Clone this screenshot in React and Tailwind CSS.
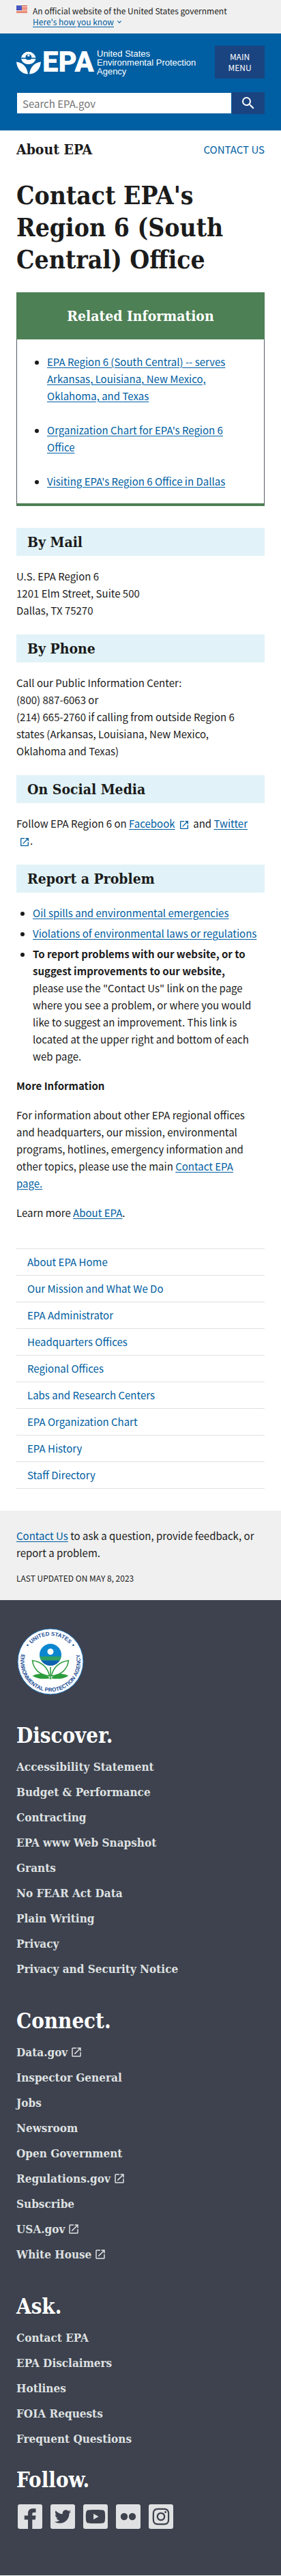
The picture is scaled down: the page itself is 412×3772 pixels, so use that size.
import React from "react";
import { MdSearch, MdOpenInNew, MdExpandMore } from "react-icons/md";
import { FaTwitter, FaInstagram, FaYoutube } from "react-icons/fa";

const SERIF = "font-['DejaVu_Serif_Condensed','DejaVu_Serif',serif] font-bold";
const LINK = "text-[#005ea2] underline underline-offset-2";

function Flag() {
  return (
    <svg className="mt-2 h-[11px] w-4 shrink-0" viewBox="0 0 16 11" aria-hidden="true">
      <rect width="16" height="11" fill="#fff" />
      {[0, 2, 4, 6, 8, 10].map((y) => (
        <rect key={y} y={y} width="16" height="1" fill="#db3e1f" />
      ))}
      <rect width="8" height="7" fill="#1e33b1" />
      {[1, 3, 5].map((y) =>
        [1, 3, 5, 7].map((x) => <circle key={x + "-" + y} cx={x} cy={y} r="0.5" fill="#fff" />)
      )}
    </svg>
  );
}

function Logo() {
  return (
    <a href="#home" className="flex items-center text-white" aria-label="EPA home">
      <svg className="h-9 w-9 shrink-0" viewBox="0 0 36 36" fill="#fff" aria-hidden="true">
        <path d="M7 11.5A11 11 0 0 1 28.5 11.5H22.2A4.4 4.4 0 1 0 13.600 11.500Z" />
        <circle cx="17.800" cy="8.200" r="1.600" />
        <path d="M7 13.200H13.800C16 15.200 20 15.200 22 13.200H28.500C27 18.200 23 21 17.800 21S8.500 18.200 7 13.200Z" />
        <path d="M0 17.500C9 19 15.500 24 17 35.500C7 35 1 28 0 17.500Z" />
        <path d="M36 17.500C27 19 20.500 24 19 35.500C29 35 35 28 36 17.500Z" />
      </svg>
      <span className="w-[82px] shrink-0 pl-0.5 font-[Roboto,'Liberation_Sans',sans-serif] text-[42px] leading-9 font-black">
        EPA
      </span>
      <span className="w-[156px] font-['Liberation_Sans',Arial,sans-serif] text-[13px] leading-[13px]">
        United States Environmental Protection Agency
      </span>
    </a>
  );
}

function Seal() {
  return (
    <svg className="h-[100px] w-[100px]" viewBox="0 0 100 100" role="img" aria-label="EPA seal">
      <defs>
        <path id="seal-top" d="M12 50A38 38 0 0 1 88 50" />
        <path id="seal-bottom" d="M17.600 20.300A44 44 0 1 0 82.400 20.300" />
      </defs>
      <circle cx="50" cy="50" r="48" fill="#fff" stroke="#1a6fb5" strokeWidth="1" />
      <g fill="#1c4f96" fontFamily="Liberation Sans, Arial, sans-serif" fontSize="8" fontWeight="bold">
        <text textAnchor="middle">
          <textPath href="#seal-top" startOffset="50%">UNITED STATES</textPath>
        </text>
        <text textAnchor="middle">
          <textPath href="#seal-bottom" startOffset="50%">ENVIRONMENTAL PROTECTION AGENCY</textPath>
        </text>
      </g>
      <circle cx="16.500" cy="26" r="1.300" fill="#1c4f96" />
      <circle cx="83.500" cy="26" r="1.300" fill="#1c4f96" />
      <circle cx="50" cy="40" r="16" fill="#0b86cf" />
      <path d="M34.200 42.500H65.800A16 16 0 0 1 63.500 48.500H36.500A16 16 0 0 1 34.200 42.500Z" fill="#2f9f62" />
      <path d="M36.500 48.500H63.500A16 16 0 0 1 36.500 48.500Z" fill="#0f62ae" />
      <circle cx="50" cy="35.500" r="4.500" fill="#fff" />
      <g fill="#fff" stroke="#2c9c3c" strokeWidth="1.600">
        <path d="M48.500 71C46 58 36 50 23.500 48.500C25 61 34 70 48.500 71Z" />
        <path d="M51.500 71C54 58 64 50 76.500 48.500C75 61 66 70 51.500 71Z" />
      </g>
      <path d="M49.200 58H50.800V76H49.200Z" fill="#2c9c3c" />
      <path d="M49 74.500C42 66 31 67 23.500 71C32 76 42 76 49 74.500Z" fill="#2c9c3c" />
      <path d="M51 74.500C58 66 69 67 76.500 71C68 76 58 76 51 74.500Z" fill="#2c9c3c" />
    </svg>
  );
}

function SectionHeading({ children, first }) {
  return (
    <h2
      className={`${SERIF} ${first ? "mt-8" : "mt-[23px]"} bg-[#e1f3f8] px-4 py-2 text-[21px] leading-[25px] text-[#1b1b1b]`}
    >
      {children}
    </h2>
  );
}

function FooterSection({ title, links }) {
  return (
    <section>
      <h2 className={`${SERIF} text-[31px] leading-9 text-white`}>{title}</h2>
      <ul className="mt-[9px] mb-10">
        {links.map(([label, external]) => (
          <li key={label} className="flex h-[37px] items-center">
            <a href="#link" className={`${SERIF} flex items-center gap-1 text-[17px] leading-6 text-[#dfe1e2]`}>
              {label}
              {external && <MdOpenInNew className="h-[18px] w-[18px]" aria-hidden="true" />}
            </a>
          </li>
        ))}
      </ul>
    </section>
  );
}

const SOCIAL = [
  ["Facebook", (
    <svg viewBox="0 0 36 36" className="h-9 w-9" fill="currentColor" aria-hidden="true">
      <path d="M15 36V22.500H9.800V16.500H15V13.500C15 8.500 17.800 6.300 22 6.300H26.500V12H23.800C22 12 21.300 12.600 21.300 14.300V16.500H26.500L25.800 22.500H21.300V36Z" />
    </svg>
  )],
  ["Twitter", <FaTwitter className="h-6 w-6" aria-hidden="true" />],
  ["YouTube", <FaYoutube className="h-[30px] w-[30px]" aria-hidden="true" />],
  ["Flickr", (
    <svg viewBox="0 0 36 36" className="h-9 w-9" fill="currentColor" aria-hidden="true">
      <circle cx="12" cy="18" r="5.200" />
      <circle cx="24" cy="18" r="5.200" />
    </svg>
  )],
  ["Instagram", <FaInstagram className="h-7 w-7" aria-hidden="true" />],
];

const NAV = [
  "About EPA Home",
  "Our Mission and What We Do",
  "EPA Administrator",
  "Headquarters Offices",
  "Regional Offices",
  "Labs and Research Centers",
  "EPA Organization Chart",
  "EPA History",
  "Staff Directory",
];

export default function App() {
  return (
    <div className="bg-white font-['Noto_Sans_CJK_SC','Noto_Sans',sans-serif] text-[15px] leading-[25px] text-[#1b1b1b]">
      <div className="flex gap-2 bg-[#f0f0f0] px-6 pb-[9px] text-[12px] leading-4">
        <Flag />
        <div className="pt-2">
          <p>An official website of the United States government</p>
          <button type="button" className="flex items-center text-[#005ea2]">
            <span className="underline underline-offset-2">Here's how you know</span>
            <MdExpandMore className="ml-0.5 h-3 w-3" aria-hidden="true" />
          </button>
        </div>
      </div>

      <header className="bg-[#005ea2] px-6 pt-[18px] pb-6">
        <div className="flex items-center justify-between">
          <Logo />
          <button type="button" className="w-[73px] shrink-0 bg-[#1a4480] px-4 py-2 text-[12px] leading-4 text-white">
            MAIN MENU
          </button>
        </div>
        <form className="mt-5 flex h-8" onSubmit={(e) => e.preventDefault()}>
          <input
            type="search"
            aria-label="Search EPA.gov"
            placeholder="Search EPA.gov"
            className="min-w-0 flex-1 border border-[#005ea2] bg-white px-2 text-[15px] placeholder:text-[#757575]"
          />
          <button type="submit" aria-label="Search" className="flex w-12 items-center justify-center bg-[#1a4480] text-white">
            <MdSearch className="h-6 w-6" aria-hidden="true" />
          </button>
        </form>
      </header>

      <main className="px-6">
        <div className="flex items-center justify-between pt-4">
          <p className={`${SERIF} text-[21px] leading-6`}>About EPA</p>
          <a href="#contact" className="text-[15px] leading-6 text-[#005ea2]">CONTACT US</a>
        </div>

        <h1 className={`${SERIF} mt-8 text-[37px] leading-[47px]`}>Contact EPA's Region 6 (South Central) Office</h1>

        <section className="mt-6 border-x border-b-4 border-x-[#565c65] border-b-[#4d8055]">
          <h2 className={`${SERIF} -mx-px bg-[#4d8055] py-[22px] text-center text-[21px] leading-[25px] text-white`}>
            Related Information
          </h2>
          <ul className="list-disc space-y-[25px] py-5 pr-8 pl-11">
            <li><a href="#r6" className={LINK}>EPA Region 6 (South Central) -- serves Arkansas, Louisiana, New Mexico, Oklahoma, and Texas</a></li>
            <li><a href="#org" className={LINK}>Organization Chart for EPA's Region 6 Office</a></li>
            <li><a href="#visit" className={LINK}>Visiting EPA's Region 6 Office in Dallas</a></li>
          </ul>
        </section>

        <SectionHeading first>By Mail</SectionHeading>
        <p className="mt-[17px]">U.S. EPA Region 6<br />1201 Elm Street, Suite 500<br />Dallas, TX 75270</p>

        <SectionHeading>By Phone</SectionHeading>
        <p className="mt-[17px] pr-6">
          Call our Public Information Center:<br />(800) 887-6063 or<br />(214) 665-2760 if calling from outside Region 6
          states (Arkansas, Louisiana, New Mexico, Oklahoma and Texas)
        </p>

        <SectionHeading>On Social Media</SectionHeading>
        <p className="mt-[17px] pr-4">
          Follow EPA Region 6 on <a href="#fb" className={LINK}>Facebook</a>{" "}
          <MdOpenInNew className="mx-0.5 inline h-4 w-4 text-[#005ea2]" aria-hidden="true" /> and{" "}
          <a href="#tw" className={LINK}>Twitter</a>{" "}
          <span className="whitespace-nowrap">
            <MdOpenInNew className="ml-1 inline h-4 w-4 text-[#005ea2]" aria-hidden="true" />.
          </span>
        </p>

        <SectionHeading>Report a Problem</SectionHeading>
        <ul className="mt-[17px] list-disc space-y-[5px] pl-6">
          <li><a href="#spills" className={LINK}>Oil spills and environmental emergencies</a></li>
          <li><a href="#violations" className={LINK}>Violations of environmental laws or regulations</a></li>
          <li className="pr-2">
            <strong>To report problems with our website, or to suggest improvements to our website,</strong>
            <br />
            please use the "Contact Us" link on the page where you see a problem, or where you would like to suggest an
            improvement. This link is located at the upper right and bottom of each web page.
          </li>
        </ul>
        <p className="mt-[18px] font-bold">More Information</p>
        <p className="mt-[18px] pr-4">
          For information about other EPA regional offices and headquarters, our mission, environmental programs,
          hotlines, emergency information and other topics, please use the main{" "}
          <a href="#contact" className={LINK}>Contact EPA page.</a>
        </p>
        <p className="mt-[18px]">Learn more <a href="#about" className={LINK}>About EPA</a>.</p>

        <nav aria-label="About EPA" className="mt-10 mb-8 border-b border-[#dfe1e2]">
          <ul>
            {NAV.map((label) => (
              <li key={label} className="border-t border-[#dfe1e2]">
                <a href="#nav" className="block px-4 py-[7px] leading-6 text-[#005ea2]">{label}</a>
              </li>
            ))}
          </ul>
        </nav>
      </main>

      <div className="bg-[#f0f0f0] px-6 pt-6 pb-6">
        <p><a href="#contact" className={LINK}>Contact Us</a> to ask a question, provide feedback, or report a problem.</p>
        <p className="mt-[17px] text-[12px] leading-4">LAST UPDATED ON MAY 8, 2023</p>
      </div>

      <footer className="bg-[#3d424e] px-6 pt-10 pb-[68px]">
        <Seal />
        <div className="mt-10">
          <FooterSection
            title="Discover."
            links={[
              ["Accessibility Statement"],
              ["Budget & Performance"],
              ["Contracting"],
              ["EPA www Web Snapshot"],
              ["Grants"],
              ["No FEAR Act Data"],
              ["Plain Writing"],
              ["Privacy"],
              ["Privacy and Security Notice"],
            ]}
          />
          <FooterSection
            title="Connect."
            links={[
              ["Data.gov", true],
              ["Inspector General"],
              ["Jobs"],
              ["Newsroom"],
              ["Open Government"],
              ["Regulations.gov", true],
              ["Subscribe"],
              ["USA.gov", true],
              ["White House", true],
            ]}
          />
          <FooterSection
            title="Ask."
            links={[["Contact EPA"], ["EPA Disclaimers"], ["Hotlines"], ["FOIA Requests"], ["Frequent Questions"]]}
          />
          <h2 className={`${SERIF} -mt-4 text-[31px] leading-9 text-white`}>Follow.</h2>
          <ul className="mt-[18px] flex gap-3 pl-0.5">
            {SOCIAL.map(([name, icon]) => (
              <li key={name}>
                <a
                  href="#social"
                  aria-label={name}
                  className="flex h-9 w-9 items-center justify-center rounded-[3px] bg-[#dfe1e2] text-[#3d424e]"
                >
                  {icon}
                </a>
              </li>
            ))}
          </ul>
        </div>
      </footer>
    </div>
  );
}
